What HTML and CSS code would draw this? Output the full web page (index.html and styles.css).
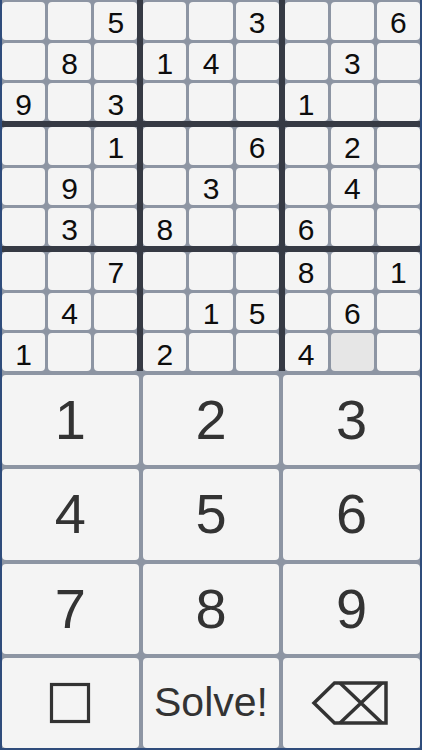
FILE: index.html
```html
<!DOCTYPE html>
<html lang="en">
<head>
<meta charset="utf-8">
<title>Sudoku</title>
<link rel="stylesheet" href="styles.css">
</head>
<body>
<div class="app">
  <div class="board">
    <div class="box"><div class="cell"></div><div class="cell"></div><div class="cell">5</div><div class="cell"></div><div class="cell">8</div><div class="cell"></div><div class="cell">9</div><div class="cell"></div><div class="cell">3</div></div>
    <div class="box"><div class="cell"></div><div class="cell"></div><div class="cell">3</div><div class="cell">1</div><div class="cell">4</div><div class="cell"></div><div class="cell"></div><div class="cell"></div><div class="cell"></div></div>
    <div class="box"><div class="cell"></div><div class="cell"></div><div class="cell">6</div><div class="cell"></div><div class="cell">3</div><div class="cell"></div><div class="cell">1</div><div class="cell"></div><div class="cell"></div></div>
    <div class="box"><div class="cell"></div><div class="cell"></div><div class="cell">1</div><div class="cell"></div><div class="cell">9</div><div class="cell"></div><div class="cell"></div><div class="cell">3</div><div class="cell"></div></div>
    <div class="box"><div class="cell"></div><div class="cell"></div><div class="cell">6</div><div class="cell"></div><div class="cell">3</div><div class="cell"></div><div class="cell">8</div><div class="cell"></div><div class="cell"></div></div>
    <div class="box"><div class="cell"></div><div class="cell">2</div><div class="cell"></div><div class="cell"></div><div class="cell">4</div><div class="cell"></div><div class="cell">6</div><div class="cell"></div><div class="cell"></div></div>
    <div class="box"><div class="cell"></div><div class="cell"></div><div class="cell">7</div><div class="cell"></div><div class="cell">4</div><div class="cell"></div><div class="cell">1</div><div class="cell"></div><div class="cell"></div></div>
    <div class="box"><div class="cell"></div><div class="cell"></div><div class="cell"></div><div class="cell"></div><div class="cell">1</div><div class="cell">5</div><div class="cell">2</div><div class="cell"></div><div class="cell"></div></div>
    <div class="box"><div class="cell">8</div><div class="cell"></div><div class="cell">1</div><div class="cell"></div><div class="cell">6</div><div class="cell"></div><div class="cell">4</div><div class="cell selected"></div><div class="cell"></div></div>
  </div>
  <div class="keypad">
    <button class="key">1</button>
    <button class="key">2</button>
    <button class="key">3</button>
    <button class="key">4</button>
    <button class="key">5</button>
    <button class="key">6</button>
    <button class="key">7</button>
    <button class="key">8</button>
    <button class="key">9</button>
    <button class="key" aria-label="Clear">
      <svg class="icon-clear" width="42" height="42" viewBox="0 0 42 42"><rect x="2.5" y="2.5" width="37" height="37" fill="none" stroke="#333" stroke-width="3.2"/></svg>
    </button>
    <button class="key key-text">Solve!</button>
    <button class="key" aria-label="Delete">
      <svg class="icon-back" width="78" height="44" viewBox="0 0 78 44"><path d="M3 22 L23.5 2 L75 2 L75 42 L23.5 42 Z" fill="none" stroke="#333" stroke-width="3.5" stroke-linejoin="miter"/><path d="M29 2 L71 42 M71 2 L29 42" fill="none" stroke="#333" stroke-width="3.5"/></svg>
    </button>
  </div>
</div>
</body>
</html>
```

FILE: styles.css
```css
* { box-sizing: border-box; }
html, body {
  margin: 0;
  padding: 0;
  width: 422px;
  height: 750px;
  overflow: hidden;
  background: #2f4c7b;
}
.app {
  width: 422px;
  height: 750px;
  background: #8d95a3;
  border-left: 2px solid #2f4c7b;
  border-right: 2px solid #2f4c7b;
  border-bottom: 2px solid #2f4c7b;
  padding-top: 2px;
  display: flex;
  flex-direction: column;
  gap: 4px;
  font-family: "Liberation Sans", Arial, Helvetica, sans-serif;
}
.board {
  height: 371px;
  display: grid;
  grid-template-columns: repeat(3, 1fr);
  grid-template-rows: repeat(3, 1fr);
  gap: 6px;
  background: #363a44;
  margin-top: -2px;
  padding-top: 2px;
  box-shadow: 0 -2px 0 #8d95a3;
}
.box {
  display: grid;
  grid-template-columns: repeat(3, 1fr);
  grid-template-rows: repeat(3, 1fr);
  gap: 3px;
  background: #8d95a3;
}
.board > .box:nth-child(-n+3) {
  margin-top: -2px;
  padding-top: 2px;
}
.cell {
  background: #f4f4f4;
  border-radius: 4px;
  display: flex;
  align-items: center;
  justify-content: center;
  padding-top: 5px;
  font-size: 30px;
  line-height: 1;
  color: #0d0d0d;
}
.cell.selected {
  background: #e6e6e6;
}
.keypad {
  flex: 1;
  display: grid;
  grid-template-columns: repeat(3, 1fr);
  grid-template-rows: repeat(4, 1fr);
  gap: 4px;
}
.key {
  margin: 0;
  padding: 0;
  border: none;
  border-radius: 4px;
  background: #f4f4f4;
  font-family: "Liberation Sans", Arial, Helvetica, sans-serif;
  font-size: 56px;
  line-height: 1;
  color: #333;
  display: flex;
  align-items: center;
  justify-content: center;
}
.key-text {
  font-size: 41px;
}
.icon-back {
  margin-left: -4px;
}
```
